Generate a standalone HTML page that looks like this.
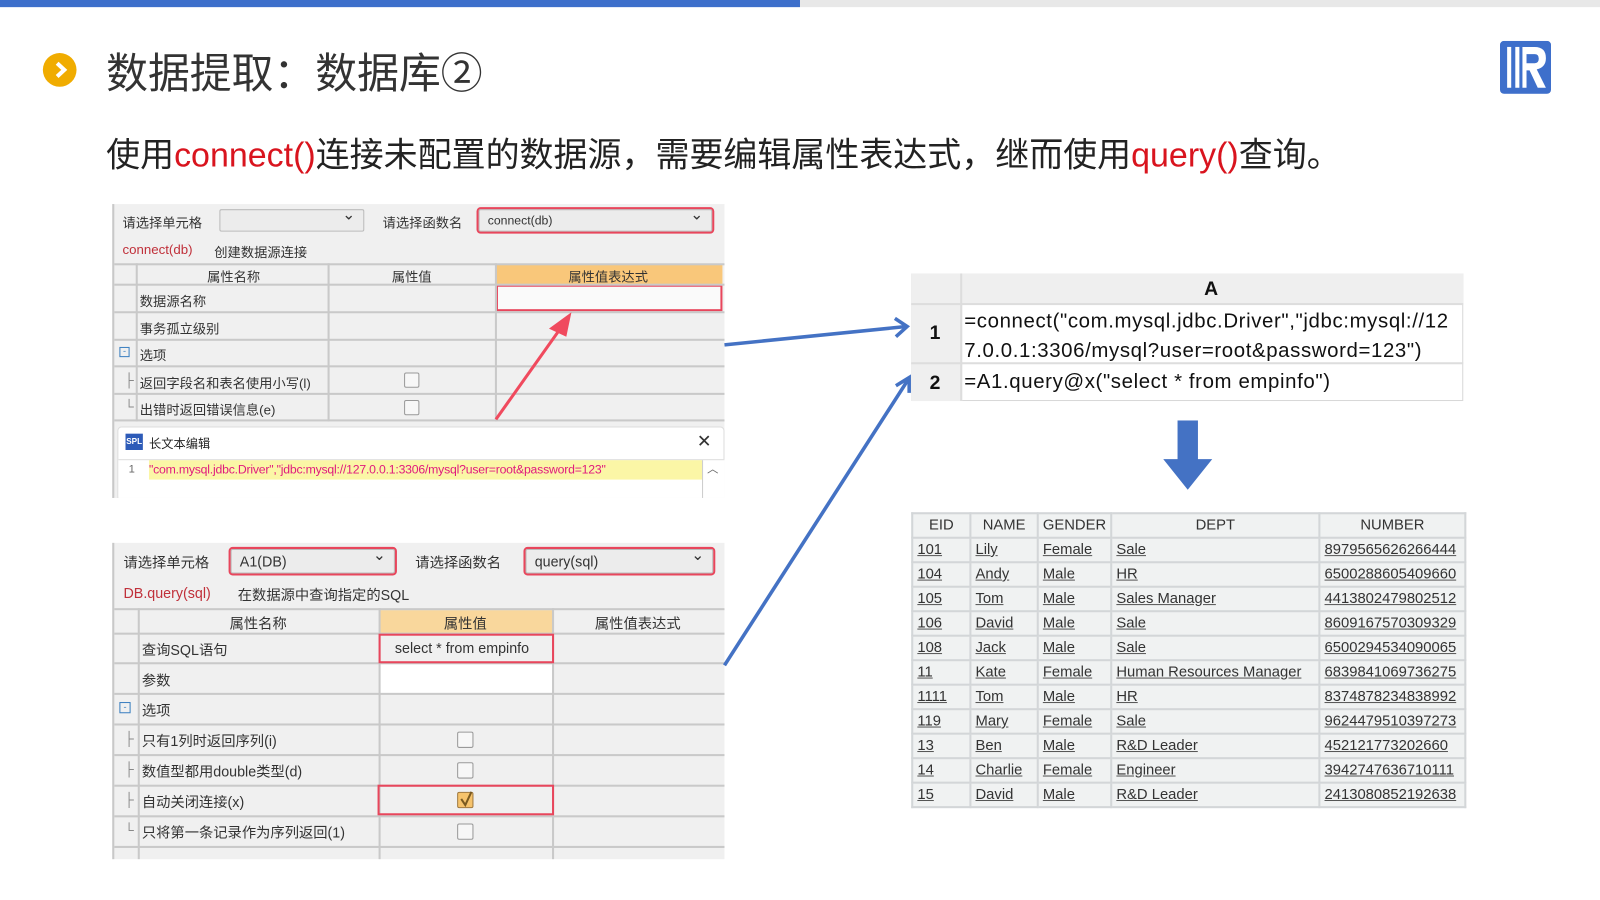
<!DOCTYPE html>
<html><head><meta charset="utf-8">
<style>
*{margin:0;padding:0;box-sizing:border-box}
body{width:1600px;height:900px;background:#fff;position:relative;overflow:hidden;font-family:"Liberation Sans","Noto Sans CJK SC",sans-serif}
#w{position:absolute;left:0;top:0;width:1568px;height:882px;transform:scale(1.0204);transform-origin:0 0}
.a{position:absolute}
.p{background:#f0f0f0;border-left:2px solid #c8c8c8}
.g{position:absolute;background:#c9c9c9}
.t{position:absolute;font-size:13px;color:#333;white-space:nowrap}
.sel{position:absolute;background:#ececec;border:1px solid #bbb;border-radius:2px;font-size:13px;color:#333;padding-left:8px;line-height:20px}
.sel:after{content:"⌄";position:absolute;right:8px;top:-5px;font-size:15px}
.red{outline:2px solid #e8465c}
.cb{position:absolute;width:15px;height:15px;border:1px solid #999;border-radius:2px;background:#f7f7f7}
table.d{position:absolute;left:893px;top:502px;border-collapse:collapse;background:#f0f2f2;font-size:14.5px;color:#333}
table.d td{border:2px solid #d3d6d8;height:24px;padding:0 4px;white-space:nowrap}
table.d td span{text-decoration:underline;text-decoration-color:#555}
table.d tr:first-child td{text-align:center}
.f{position:absolute;font-size:20px;letter-spacing:0.6px;color:#111;white-space:nowrap}
</style></head><body><div id="w">
<div class="a" style="left:0;top:0;width:784px;height:7px;background:#3d6fcb"></div>
<div class="a" style="left:784px;top:0;width:784px;height:7px;background:#e8e8e8"></div>
<div class="a" style="left:42px;top:52px;width:33px;height:33px;border-radius:50%;background:#f0ac00"></div>
<svg class="a" style="left:42px;top:52px" width="33" height="33"><path d="M14 10 L21 16.5 L14 23" stroke="#fff" stroke-width="4" fill="none"/></svg>
<div class="a" style="left:104px;top:38px;font-size:41px;color:#333;white-space:nowrap">数据提取：数据库②</div>
<svg class="a" style="left:1470px;top:40px" width="50" height="52"><rect width="50" height="52" rx="4" fill="#3e6fcb"/><rect x="7" y="6" width="4" height="40" fill="#fff"/><rect x="15" y="6" width="4" height="40" fill="#fff"/><path d="M22 6 H34 Q45 6 45 17 Q45 26 36 28 L45 46 H37 L29 29 H26 V46 H22 Z M26 13 V22 H34 Q38 22 38 17.5 Q38 13 34 13 Z" fill="#fff"/></svg>
<div class="a" style="left:104px;top:124px;font-size:33.3px;color:#222;white-space:nowrap">使用<span style="color:#d9141e">connect()</span>连接未配置的数据源，需要编辑属性表达式，继而使用<span style="color:#d9141e">query()</span>查询。</div>

<div class="a p" style="left:110px;top:200px;width:600px;height:288px"></div>
<div class="t" style="left:120px;top:208px">请选择单元格</div>
<div class="sel" style="left:215px;top:205px;width:142px;height:22px"></div>
<div class="t" style="left:375px;top:208px">请选择函数名</div>
<div class="sel red" style="left:469px;top:205px;width:229px;height:22px;font-size:12px">connect(db)</div>
<div class="t" style="left:120px;top:237px;color:#c0303a">connect(db)</div>
<div class="t" style="left:210px;top:237px">创建数据源连接</div>
<div class="a" style="left:486px;top:259px;width:222px;height:20px;background:#f9c77a"></div>
<div class="a" style="left:486px;top:279px;width:222px;height:26px;background:#fafafa;border:2px solid #e8465c"></div>
<div class="g" style="left:112px;top:258px;width:598px;height:2px"></div>
<div class="g" style="left:112px;top:278px;width:598px;height:2px"></div>
<div class="g" style="left:112px;top:305px;width:598px;height:2px"></div>
<div class="g" style="left:112px;top:332px;width:598px;height:2px"></div>
<div class="g" style="left:112px;top:358px;width:598px;height:2px"></div>
<div class="g" style="left:112px;top:385px;width:598px;height:2px"></div>
<div class="g" style="left:112px;top:411px;width:598px;height:2px"></div>
<div class="g" style="left:133px;top:258px;width:2px;height:155px"></div>
<div class="g" style="left:321px;top:258px;width:2px;height:155px"></div>
<div class="g" style="left:485px;top:258px;width:2px;height:155px"></div>
<div class="t" style="left:203px;top:261px">属性名称</div>
<div class="t" style="left:384px;top:261px">属性值</div>
<div class="t" style="left:557px;top:261px">属性值表达式</div>
<div class="t" style="left:137px;top:285px">数据源名称</div>
<div class="t" style="left:137px;top:312px">事务孤立级别</div>
<div class="a" style="left:117px;top:340px;width:10px;height:10px;border:1px solid #3a7fc0;font-size:9px;line-height:7px;text-align:center;color:#3a7fc0">-</div>
<div class="t" style="left:137px;top:338px">选项</div>
<div class="t" style="left:122px;top:365px;color:#888">├</div>
<div class="t" style="left:137px;top:365px">返回字段名和表名使用小写(l)</div>
<div class="t" style="left:122px;top:391px;color:#888">└</div>
<div class="t" style="left:137px;top:391px">出错时返回错误信息(e)</div>
<div class="cb" style="left:396px;top:365px"></div>
<div class="cb" style="left:396px;top:392px"></div>
<div class="a" style="left:115px;top:418px;width:595px;height:70px;background:#fff;border:1px solid #ddd;border-radius:4px 4px 0 0"></div>
<div class="a" style="left:123px;top:425px;width:17px;height:16px;background:#2d5bb8;color:#fff;font-size:8px;font-weight:bold;line-height:16px;text-align:center">SPL</div>
<div class="t" style="left:146px;top:426px;font-size:12px;color:#222">长文本编辑</div>
<div class="t" style="left:683px;top:423px;font-size:17px;color:#333">✕</div>
<div class="a" style="left:116px;top:450px;width:594px;height:38px;background:#fff;border-top:1px solid #ddd"></div>
<div class="a" style="left:146px;top:451px;width:542px;height:19px;background:#fbf6a6"></div>
<div class="a" style="left:688px;top:451px;width:20px;height:37px;border-left:1px solid #ccc;color:#666;font-size:11px;text-align:center">︿</div>
<div class="t" style="left:126px;top:454px;font-size:11px;color:#666">1</div>
<div class="t" style="left:146px;top:453px;font-size:12px;color:#e0197d;letter-spacing:-0.2px">"com.mysql.jdbc.Driver","jdbc:mysql://127.0.0.1:3306/mysql?user=root&amp;password=123"</div>

<div class="a p" style="left:110px;top:532px;width:600px;height:310px"></div>
<div class="t" style="left:121px;top:541px;font-size:14px">请选择单元格</div>
<div class="sel red" style="left:226px;top:538px;width:161px;height:24px;font-size:14px;line-height:22px">A1(DB)</div>
<div class="t" style="left:407px;top:541px;font-size:14px">请选择函数名</div>
<div class="sel red" style="left:515px;top:538px;width:184px;height:24px;font-size:14px;line-height:22px">query(sql)</div>
<div class="t" style="left:121px;top:573px;font-size:14px;color:#c0303a">DB.query(sql)</div>
<div class="t" style="left:233px;top:573px;font-size:14px">在数据源中查询指定的SQL</div>
<div class="a" style="left:372px;top:598px;width:170px;height:23px;background:#f9d79c"></div>
<div class="a" style="left:372px;top:651px;width:170px;height:29px;background:#fff"></div>
<div class="g" style="left:112px;top:596px;width:598px;height:2px"></div>
<div class="g" style="left:112px;top:620px;width:598px;height:2px"></div>
<div class="g" style="left:112px;top:649px;width:598px;height:2px"></div>
<div class="g" style="left:112px;top:679px;width:598px;height:2px"></div>
<div class="g" style="left:112px;top:709px;width:598px;height:2px"></div>
<div class="g" style="left:112px;top:739px;width:598px;height:2px"></div>
<div class="g" style="left:112px;top:769px;width:598px;height:2px"></div>
<div class="g" style="left:112px;top:799px;width:598px;height:2px"></div>
<div class="g" style="left:112px;top:829px;width:598px;height:2px"></div>
<div class="g" style="left:135px;top:596px;width:2px;height:246px"></div>
<div class="g" style="left:371px;top:596px;width:2px;height:246px"></div>
<div class="g" style="left:541px;top:596px;width:2px;height:246px"></div>
<div class="a" style="left:371px;top:621px;width:172px;height:29px;border:2px solid #e8465c"></div>
<div class="a" style="left:370px;top:769px;width:173px;height:30px;border:2px solid #e8465c"></div>
<div class="t" style="left:225px;top:601px;font-size:14px">属性名称</div>
<div class="t" style="left:435px;top:601px;font-size:14px">属性值</div>
<div class="t" style="left:583px;top:601px;font-size:14px">属性值表达式</div>
<div class="t" style="left:139px;top:627px;font-size:14px">查询SQL语句</div>
<div class="t" style="left:387px;top:627px;font-size:14px">select * from empinfo</div>
<div class="t" style="left:139px;top:657px;font-size:14px">参数</div>
<div class="a" style="left:117px;top:688px;width:11px;height:11px;border:1px solid #3a7fc0;font-size:9px;line-height:8px;text-align:center;color:#3a7fc0">-</div>
<div class="t" style="left:139px;top:686px;font-size:14px">选项</div>
<div class="t" style="left:122px;top:716px;color:#888">├</div>
<div class="t" style="left:139px;top:716px;font-size:14px">只有1列时返回序列(i)</div>
<div class="t" style="left:122px;top:746px;color:#888">├</div>
<div class="t" style="left:139px;top:746px;font-size:14px">数值型都用double类型(d)</div>
<div class="t" style="left:122px;top:776px;color:#888">├</div>
<div class="t" style="left:139px;top:776px;font-size:14px">自动关闭连接(x)</div>
<div class="t" style="left:122px;top:806px;color:#888">└</div>
<div class="t" style="left:139px;top:806px;font-size:14px">只将第一条记录作为序列返回(1)</div>
<div class="cb" style="left:448px;top:717px;width:16px;height:16px"></div>
<div class="cb" style="left:448px;top:747px;width:16px;height:16px"></div>
<div class="cb" style="left:448px;top:776px;width:16px;height:16px;background:#f6c36c;border-color:#a07a40"></div>
<svg class="a" style="left:448px;top:774px" width="18" height="18"><path d="M4 9 L8 15 L14 2" stroke="#7a5a20" stroke-width="2" fill="none"/></svg>
<div class="cb" style="left:448px;top:807px;width:16px;height:16px"></div>

<div class="a" style="left:893px;top:268px;width:541px;height:125px;background:#fff;border:1px solid #d8d8d8"></div>
<div class="a" style="left:893px;top:268px;width:541px;height:30px;background:#efefef"></div>
<div class="a" style="left:893px;top:268px;width:50px;height:125px;background:#efefef;border-right:2px solid #ddd"></div>
<div class="g" style="left:893px;top:297px;width:541px;height:2px;background:#ddd"></div>
<div class="g" style="left:893px;top:355px;width:541px;height:2px;background:#ddd"></div>
<div class="t" style="left:1180px;top:273px;font-size:19px;font-weight:bold;color:#111">A</div>
<div class="t" style="left:911px;top:316px;font-size:19px;font-weight:bold;color:#111">1</div>
<div class="t" style="left:911px;top:365px;font-size:19px;font-weight:bold;color:#111">2</div>
<div class="f" style="left:945px;top:301px;line-height:29px">=connect("com.mysql.jdbc.Driver","jdbc:mysql://12<br>7.0.0.1:3306/mysql?user=root&amp;password=123")</div>
<div class="f" style="left:945px;top:363px">=A1.query@x("select * from empinfo")</div>
<svg class="a" style="left:1138px;top:412px" width="52" height="70"><path d="M16 0 H36 V38 H50 L26 68 L2 38 H16 Z" fill="#4472c4"/></svg>

<svg class="a" style="left:0;top:0" width="1568" height="882">
<g stroke="#4472c4" stroke-width="3.5" fill="none">
<path d="M710 338 L888 320"/><path d="M877 312 L889 320 L878 330"/>
<path d="M710 652 L890 372"/><path d="M878 378 L891 370 L891 385"/>
</g>
<path d="M486 411 L552 318" stroke="#f04a5e" stroke-width="3"/>
<path d="M560 306 L538 322 L555 330 Z" fill="#f04a5e"/>
</svg>

<table class="d">
<tr><td style="width:57px">EID</td><td style="width:66px">NAME</td><td style="width:70px">GENDER</td><td style="width:204px">DEPT</td><td style="width:143px">NUMBER</td></tr>
<tr><td><span>101</span></td><td><span>Lily</span></td><td><span>Female</span></td><td><span>Sale</span></td><td><span>8979565626266444</span></td></tr>
<tr><td><span>104</span></td><td><span>Andy</span></td><td><span>Male</span></td><td><span>HR</span></td><td><span>6500288605409660</span></td></tr>
<tr><td><span>105</span></td><td><span>Tom</span></td><td><span>Male</span></td><td><span>Sales Manager</span></td><td><span>4413802479802512</span></td></tr>
<tr><td><span>106</span></td><td><span>David</span></td><td><span>Male</span></td><td><span>Sale</span></td><td><span>8609167570309329</span></td></tr>
<tr><td><span>108</span></td><td><span>Jack</span></td><td><span>Male</span></td><td><span>Sale</span></td><td><span>6500294534090065</span></td></tr>
<tr><td><span>11</span></td><td><span>Kate</span></td><td><span>Female</span></td><td><span>Human Resources Manager</span></td><td><span>6839841069736275</span></td></tr>
<tr><td><span>1111</span></td><td><span>Tom</span></td><td><span>Male</span></td><td><span>HR</span></td><td><span>8374878234838992</span></td></tr>
<tr><td><span>119</span></td><td><span>Mary</span></td><td><span>Female</span></td><td><span>Sale</span></td><td><span>9624479510397273</span></td></tr>
<tr><td><span>13</span></td><td><span>Ben</span></td><td><span>Male</span></td><td><span>R&amp;D Leader</span></td><td><span>452121773202660</span></td></tr>
<tr><td><span>14</span></td><td><span>Charlie</span></td><td><span>Female</span></td><td><span>Engineer</span></td><td><span>3942747636710111</span></td></tr>
<tr><td><span>15</span></td><td><span>David</span></td><td><span>Male</span></td><td><span>R&amp;D Leader</span></td><td><span>2413080852192638</span></td></tr>
</table>
</div></body></html>
